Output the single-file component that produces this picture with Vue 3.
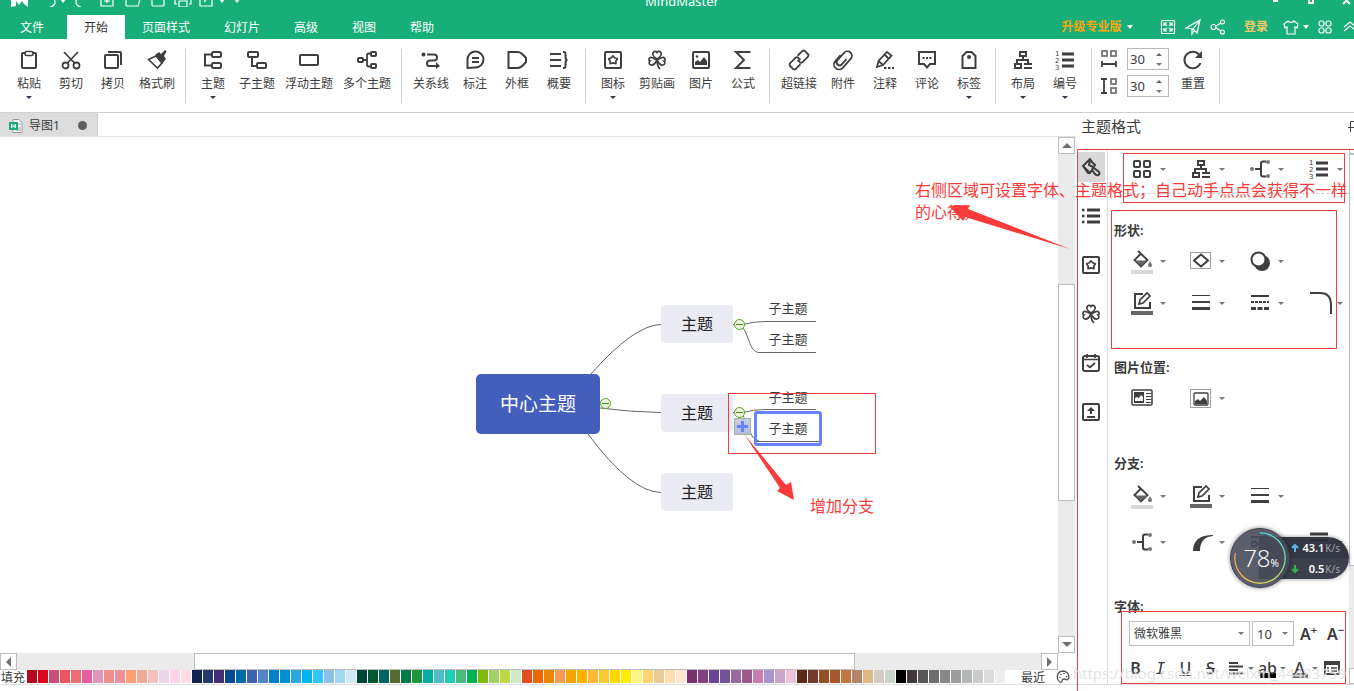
<script setup>
import { ref } from 'vue'

const icons = {
  paste: '<rect x="3" y="3" width="14" height="15" rx="1"/><rect x="6" y="1.5" width="8" height="4" rx="1.5" fill="#fff" stroke-width="1.6"/>',
  cut: '<g stroke-width="1.8"><circle cx="4.5" cy="15.5" r="3"/><circle cx="15.5" cy="15.5" r="3"/><path d="M6.5 13 17 2M13.5 13 3 2"/></g>',
  copy: '<rect x="2" y="5" width="13" height="13" rx="1"/><path d="M5 2h12q1 0 1 1v12"/>',
  brush: '<path d="M1.500 9.500 9 6l6 7-4.500 5Z" stroke-width="1.600"/><path fill="currentColor" stroke="none" d="m8 5 4-3 2 2 4-4 1.500 1.500L17 6l2 3-4 5Z"/>',
  topic: '<rect x="9" y="2" width="9" height="5" rx="1.500"/><rect x="9" y="13" width="9" height="5" rx="1.500"/><path d="M9 4.500H2v11h7"/>',
  subtopic: '<rect x="1" y="2" width="10" height="5" rx="1"/><rect x="10" y="13" width="9" height="5" rx="1"/><path d="M5 7v9h5"/>',
  floating: '<rect x="1" y="5" width="18" height="10" rx="1"/>',
  multi: '<rect x="1" y="8" width="5" height="4" rx="1"/><rect x="14" y="2" width="5" height="4" rx="1"/><rect x="14" y="14" width="5" height="4" rx="1"/><path d="M6 10h4M14 3.500h-2q-2 0-2 2v9q0 2 2 2h2" stroke-width="1.800"/>',
  relation: '<circle cx="2.500" cy="4.500" r="2" fill="currentColor" stroke="none"/><path d="M6 4.500h7q3 0 3 3t-3 3H9q-3 0-3 3t3 2.500h6"/><path fill="currentColor" stroke="none" d="m15 12 4 4-4 3Z"/>',
  callout: '<path d="M2.500 18v-8a8 8 0 1 1 8 7.500Z"/><path d="M7 8h7M7 12h7" stroke-width="1.800"/>',
  frame: '<path d="M1.500 2H11q3 0 8 6v4q-5 6-8 6H1.500Z"/>',
  summary: '<path d="M1 4h11M1 10h11M1 16h11M14 2h1q1.500 0 1.500 2v3q0 3 2 3-2 0-2 3v3q0 2-1.500 2h-1"/>',
  icon: '<rect x="2" y="2" width="16" height="16" rx="1"/><path d="m10 5.800 1.600 2 2.800 1-1.500 2.200v2.700l-2.900-.8-2.900.8V11L5.600 8.800l2.800-1Z" stroke-width="1.700" stroke-linejoin="round"/>',
  clover: '<g stroke-width="1.700"><path d="M10 9C7 7 5 5 6 3c1-2 3-2 4-.5C11 1 13 1 14 3c1 2-1 4-4 6Z"/><path d="M10 10C7 8 4 6 2.500 8c-1 1.500-.5 3 .5 3-1.500 1.500-1 3.500 1 4 2.500.4 4.500-2 6-5ZM10 10c3-2 6-4 7.500-2 1 1.500.5 3-.5 3 1.500 1.500 1 3.500-1 4-2.500.4-4.500-2-6-5Z"/><path d="M10 10q0 6 3 9"/></g>',
  picture: '<rect x="2" y="2" width="16" height="16" rx="1"/><path fill="currentColor" stroke="none" d="M4 15v-3l3-2 2 2 4-5 3 4v4Z"/><circle cx="6" cy="6.500" r="1.300" fill="currentColor" stroke="none"/>',
  sigma: '<path d="M17.500 2H3l8 8-8 8h14.500"/>',
  link: '<g transform="rotate(-45 10 10)" stroke-width="1.800"><path d="M8 14H1.500q-2 0-2-2V8q0-2 2-2H9q2 0 2 2v3M12 6h6.500q2 0 2 2v4q0 2-2 2H11q-2 0-2-2V9"/></g>',
  clip: '<g transform="rotate(-48 10 10)" stroke-width="1.800"><path d="M12 5H4a5 5 0 0 0 0 10h12a4.300 4.300 0 0 0 0-9H6a2.700 2.700 0 0 0 0 6h7"/></g>',
  note: '<path d="m2 17 1.500-6L12 2l4.500 3.500L8 15Zm8-12 4 4M3.500 11 8 15" stroke-width="1.800"/><path d="M9 18h2.500m1.500 0h2.500m1.500 0h2"/>',
  comment: '<path d="M2 2h16v12h-5l-3 3.500L7 14H2Z"/><path d="M5.500 8h2m1.500 0h2m1.500 0h2"/>',
  tag: '<path d="M3.500 18V6L7.500 2h5l4 4v12Z"/><circle cx="10" cy="7" r="2" fill="currentColor" stroke="none"/>',
  layout: '<rect x="7" y="2" width="6" height="4"/><path d="M10 6v4M4 14v-4h11v3"/><rect x="2" y="14" width="6" height="4"/><path d="M11 14h8M11 18h8"/>',
  number: '<path d="M7 4h12M7 10h12M7 16h12" stroke-width="3"/><g fill="currentColor" stroke="none" font-family="DejaVu Sans" font-size="7"><text x="0" y="6">1</text><text x="0" y="13">2</text><text x="0" y="20">3</text></g>',
  reset: '<path d="M17.500 13A8.300 8.300 0 1 1 16 4.500"/><path fill="currentColor" stroke="none" d="M19 1v7h-7Z"/>',
  hspace: '<g stroke-width="1.800"><g stroke="#777"><rect x="3" y="2" width="5" height="5"/><rect x="12" y="2" width="5" height="5"/></g><path d="M3 12v6M17 12v6M3 15h14"/></g>',
  vspace: '<g stroke-width="1.800"><g stroke="#777"><rect x="12" y="3" width="5" height="5"/><rect x="12" y="12" width="5" height="5"/></g><path d="M2 3h6M2 17h6M5 3v14"/></g>',
  styleBrush: '<path d="m2 9 7-7 2 3 3 3-5 8Zm7-7-1 6 4 2M2 9l5 7 2 0M13 11l5 4q1 2-.5 3T14 17l-3-4"/>',
  list: '<path d="M6 4h13M6 10h13M6 16h13" stroke-width="2.800"/><path d="M1 4h2.500M1 10h2.500M1 16h2.500" stroke-width="2.500"/>',
  calendar: '<rect x="2" y="3" width="16" height="15" rx="2"/><path d="M2 6.500h16M6 1v4M14 1v4M6 12l3 2.500 5-4.500" stroke-width="1.700"/>',
  upload: '<rect x="2" y="2" width="16" height="16" rx="1"/><path d="M6 15h8M10 12V8"/><path fill="currentColor" stroke="none" d="m6 9 4-4 4 4Z"/>',
  grid: '<rect x="2" y="2" width="6" height="6" rx="1"/><rect x="12" y="2" width="6" height="6" rx="1"/><rect x="2" y="12" width="6" height="6" rx="1"/><rect x="12" y="12" width="6" height="6" rx="1"/>',
  branch: '<circle cx="2" cy="10" r="2" fill="#777" stroke="none"/><path d="M5 10h6M16 2.500h-3q-2 0-2 2v11q0 2 2 2h3"/><circle cx="18" cy="3" r="2" fill="#777" stroke="none"/><circle cx="18" cy="17" r="2" fill="#777" stroke="none"/>',
  fill: '<path d="m6 0 9.500 9-6.500 6.500L2.500 9 9 2.500" stroke-width="1.900"/><path fill="#666" stroke="none" d="M3 9.500h12L9 15Z"/><path d="M18 10q4 6 0 6t0-6Z" fill="#777" stroke="none"/><path d="M-1 21h22" stroke="#d9d9d9" stroke-width="4"/>',
  shape: '<rect x="-.5" y="1.500" width="20" height="16" stroke-width="1" stroke-dasharray="1 1"/><path d="m3 9.500 7-6 7 6-7 6Z"/>',
  shadow: '<circle cx="12" cy="12" r="7" fill="currentColor"/><circle cx="8.500" cy="8.500" r="7" fill="#fff"/>',
  edit: '<path d="M11 1H3v14h15V9"/><path d="m7 11 1-4 7-7 3 3-7 7Z" stroke-width="1.700"/><path d="M-1 20h22" stroke="#666" stroke-width="4"/>',
  lines: '<path d="M1 2.500h18" stroke-width="1"/><path d="M1 9h18"/><path d="M1 15.500h18" stroke-width="3"/>',
  dashes: '<path d="M1 3h18"/><path d="M1 9h18" stroke-dasharray="3 1"/><path d="M1 15.500h18" stroke-width="3" stroke-dasharray="5 1.500"/>',
  corner: '<path d="M1 0h10Q22 0 22 12v9"/>',
  photoText: '<rect x="0" y="2" width="20" height="15" rx="1" stroke-width="1.500"/><path fill="currentColor" stroke="none" d="M2 4h10v11H2Z"/><path fill="#fff" stroke="none" d="M3 13v-3l2-1 2 1 2-3 2 2v4Z"/><path d="M14 5.500h5M14 8.500h5M14 11.500h5M14 14.500h5" stroke-width="1"/>',
  photoFit: '<rect x="-.5" y="1.500" width="20" height="18" stroke-width="1" stroke-dasharray="1 1"/><rect x="3" y="5" width="14" height="12" rx="1" stroke-width="1.300"/><path fill="currentColor" stroke="none" d="M4 16v-3l3-2 2 2 4-4 3 4v3Z"/>',
  curve: '<path fill="currentColor" stroke="none" d="M2 19q0-16 20-16v1Q9 5 9 19Z"/>',
  arrows: '<path d="M1 5h14"/><path d="m14 1 5 4-5 4Z" fill="currentColor" stroke="none"/><circle cx="4" cy="12" r="2.500"/><path d="M7 12h12"/>',
  lineStyle: '<path d="M1 2h18" stroke-width="3"/><path d="M1 8h18" stroke-dasharray="3 1"/>'
}

const heads = {
  logo: '<path d="M1 20V7l4 6 5-5 4 5 4-6v13l-4-3-2-3-3 4-3-4v5Z" fill="#fff" stroke="none"/>',
  undo: '<path d="M5 10h7q4 1 4 5t-5 5"/>',
  redo: '<path d="M14 10H9q-4 1-4 5t5 5"/>',
  new: '<path d="M4 5v14h12V5M10 10v6M7 14h6"/>',
  open: '<path d="M3 19V8h12v3M3 19h12l3-10"/>',
  save: '<path d="M4 5v13q0 1 1 1h10q1 0 1-1V5"/>',
  print: '<path d="M4 17H2v-7h16v7h-2M6 14h8v6H6z"/>',
  export: '<path d="M4 6v13h12V6M8 15l5-6"/>',
  caretTop: '<path fill="currentColor" stroke="none" d="M7 12h6l-3 4z"/>',
  caret: '<path fill="currentColor" stroke="none" d="M7 8h6l-3 4z"/>',
  full: '<rect x="3.500" y="3.500" width="13" height="13" rx="1"/><path d="M6 9V6h3M6 6l3 3M11 6h3v3M14 6l-3 3M6 11v3h3M6 14l3-3M14 11v3h-3M14 14l-3-3"/>',
  send: '<path d="m3 11 14-8-3 13-4-4Zm7 1 7-9M9 12v5l2-3"/>',
  share: '<circle cx="5.500" cy="10" r="2.500"/><circle cx="14.500" cy="5" r="2"/><circle cx="14.500" cy="15" r="2"/><path d="m8 9 5-3M8 11l5 3"/>',
  shirt: '<path d="M7 4q3 3 6 0l4 3-1 4-2-1v7H6v-7l-2 1-1-4Z"/>',
  apps: '<rect x="4" y="4" width="5" height="5" rx="2"/><rect x="11" y="4" width="5" height="5" rx="2"/><rect x="4" y="11" width="5" height="5" rx="2"/><rect x="11" y="11" width="5" height="5" rx="2"/>',
  up: '<path d="m6 10 6-5 6 5M6 14l6-5 6 5"/>'
}

const quick = ['logo', 'undo', 'caretTop', 'redo', 'new', 'open', 'save', 'print', 'export', 'caretTop', 'caretTop']
const menus = ['文件', '开始', '页面样式', '幻灯片', '高级', '视图', '帮助']
const groups = [
  [['粘贴', 'paste', true], ['剪切', 'cut'], ['拷贝', 'copy'], ['格式刷', 'brush']],
  [['主题', 'topic', true], ['子主题', 'subtopic'], ['浮动主题', 'floating'], ['多个主题', 'multi']],
  [['关系线', 'relation'], ['标注', 'callout'], ['外框', 'frame'], ['概要', 'summary']],
  [['图标', 'icon', true], ['剪贴画', 'clover'], ['图片', 'picture'], ['公式', 'sigma']],
  [['超链接', 'link'], ['附件', 'clip'], ['注释', 'note'], ['评论', 'comment'], ['标签', 'tag', true]],
  [['布局', 'layout', true], ['编号', 'number', true]]
]
const spins = ref([
  { icon: 'hspace', label: '水平间距', value: 30 },
  { icon: 'vspace', label: '垂直间距', value: 30 }
])
const sideTabs = [
  ['styleBrush', '主题格式'], ['list', '大纲'], ['icon', '图标'],
  ['clover', '剪贴画'], ['calendar', '任务'], ['upload', '导出']
]
const sections = [
  { title: '形状:', cls: 'shape', rows: [['fill', 'shape', 'shadow'], ['edit', 'lines', 'dashes', 'corner']] },
  { title: '图片位置:', cls: 'photo', rows: [['photoText', 'photoFit']] },
  { title: '分支:', cls: 'limb', rows: [['fill', 'edit', 'lines'], ['branch', 'curve', 'arrows', 'lineStyle']] }
]
const nodes = [
  { text: '中心主题', kind: 'root', x: 476, y: 237 },
  { text: '主题', kind: 'main', x: 661, y: 168 },
  { text: '主题', kind: 'main', x: 661, y: 257 },
  { text: '主题', kind: 'main', x: 661, y: 336 },
  { text: '子主题', kind: 'leaf', x: 758, y: 159 },
  { text: '子主题', kind: 'leaf', x: 758, y: 190 },
  { text: '子主题', kind: 'leaf', x: 758, y: 248 },
  { text: '子主题', kind: 'leaf picked', x: 754, y: 274 }
]
const folds = [[605, 266], [739, 187], [739, 275]]
const colors = (
  'B40A1B D8091F C94F79 EA5564 EB6E73 E660A0 E197B8 EF908A F19099 FFA07A EFAB95 F6C0BC EAD6E8 FFD5E5 FFDFE4 ' +
  '0E2350 23386D 402D74 08488C 006AA6 4062B0 5584C6 0080CD 0090D0 2EA7E0 00B4F0 30C8FA 8DC0EB A0D8EF CFEAF6 ' +
  '004438 005830 006560 556B2F 007A48 1D963F 00AF9E 50BEC4 1BCEB4 48BB80 00B254 80B910 A3D165 BFD845 CEE8CC ' +
  'E34F20 EC6800 F08300 F39A55 F3A500 FFB000 FFB738 FBCA30 FFD900 FFEC00 FDF286 FED470 EACB98 FFDDAD FCE8D0 ' +
  '783070 834085 684398 74529A 9868A0 9D598A CC7DB0 A893CF C9A6C9 ECC3DB ' +
  '5B2A18 733A30 944E28 A9572A C07840 B48568 DEB887 D5CBC6 CAD4CB ' +
  '000000 403838 585656 6E6E6E 878787 9C9E9E B5B7B7 CACBCB DBDBDB EDEDED'
).split(' ')
</script>

<template>
  <div class="app">
    <header>
      <div class="titlebar">
        <div class="quick">
          <button v-for="(q, i) in quick" :key="i" :aria-label="q">
            <svg class="hi" viewBox="0 0 20 20" v-html="heads[q]"></svg>
          </button>
        </div>
        <span class="apptitle">MindMaster</span>
        <svg class="wins" viewBox="0 0 84 15"><path d="M3 1h5M39-3v6h4v-6M73-3l7 7M80-3l-7 7" /></svg>
      </div>
      <div class="menubar">
        <nav>
          <button v-for="(m, i) in menus" :key="m" :class="{ on: i === 1 }">{{ m }}</button>
        </nav>
        <div class="account">
          <button class="pro">升级专业版</button>
          <button aria-label="版本"><svg class="hi" viewBox="0 0 20 20" v-html="heads.caret"></svg></button>
          <span></span>
          <button v-for="n in ['full', 'send', 'share']" :key="n" :aria-label="n">
            <svg class="hi" viewBox="0 0 20 20" v-html="heads[n]"></svg>
          </button>
          <button class="login">登录</button>
          <button v-for="n in ['shirt', 'caret', 'apps', 'up']" :key="n" :aria-label="n">
            <svg class="hi" viewBox="0 0 20 20" v-html="heads[n]"></svg>
          </button>
        </div>
      </div>
    </header>

    <div class="ribbon">
      <template v-for="(g, gi) in groups" :key="gi">
        <button v-for="it in g" :key="it[0]" class="tool" :class="'n' + it[0].length">
          <svg class="ic" viewBox="0 0 20 20" v-html="icons[it[1]]"></svg>
          <span>{{ it[0] }}</span>
          <i v-if="it[2]" class="caret dark"></i>
        </button>
        <div class="sep"></div>
      </template>
      <div class="spins">
        <label v-for="s in spins" :key="s.icon">
          <svg class="ic" viewBox="0 0 20 20" v-html="icons[s.icon]"></svg>
          <span class="spinbox">
            <input v-model="s.value" type="number" :aria-label="s.label" />
            <span class="steps"><i class="caret upward"></i><i class="caret"></i></span>
          </span>
        </label>
      </div>
      <button class="tool n2">
        <svg class="ic" viewBox="0 0 20 20" v-html="icons.reset"></svg>
        <span>重置</span>
      </button>
      <div class="sep"></div>
    </div>

    <main>
      <section class="work">
        <div class="tabs">
          <button class="doc">
            <svg viewBox="0 0 14 14">
              <path d="M4 .5h6l3 3v10H4z" fill="#fff" stroke="#999" />
              <path d="M6 9h6M6 11h6M9 5h3" stroke="#999" />
              <path d="M0 3h9v8H0z" fill="#15ae78" />
              <path d="M2.500 9V5l4 4V5l-4 4" stroke="#fff" fill="none" />
            </svg>
            <span>导图1</span>
            <i></i>
          </button>
        </div>
        <div class="stage">
          <div class="canvas">
            <svg class="wires" width="900" height="515">
              <g fill="none" stroke="#666">
                <path d="M590 238q44-50 71-50.500M600 271q30 4 61 4.500M588 297q43 58 73 58.500" />
                <path d="M733 187.500h10q10-3 22-3h51M739 187c11 8 9 28 20 28.500h57M733 275.500h10q10-3 22-3h51M739 275c11 8 9 28 20 28.500" />
              </g>
            </svg>
            <div
              v-for="(n, i) in nodes" :key="i" class="node" :class="n.kind"
              :style="{ left: n.x + 'px', top: n.y + 'px' }"
            ><span>{{ n.text }}</span></div>
            <button
              v-for="(f, i) in folds" :key="'f' + i" class="fold" aria-label="折叠"
              :style="{ left: f[0] - 5 + 'px', top: f[1] - 5 + 'px' }"
            ></button>
            <button class="add" aria-label="增加分支"></button>
            <div class="mark branchmark"></div>
            <svg class="wires" width="900" height="515">
              <path fill="#fb3a3a" d="m744 297 42 51 5-3 3 18-17-9 3-3Z" />
            </svg>
            <span class="remark addtext">增加分支</span>
          </div>
          <div class="vbar">
            <button aria-label="向上"><i class="tri t"></i></button>
            <div class="track"><div class="thumb"></div></div>
            <button aria-label="向下"><i class="tri b"></i></button>
          </div>
          <div class="hbar">
            <button aria-label="向左"><i class="tri l"></i></button>
            <div class="track"><div class="thumb"></div></div>
            <button aria-label="向右"><i class="tri r"></i></button>
          </div>
        </div>
        <div class="palette">
          <span>填充</span>
          <div class="swatches">
            <button v-for="c in colors" :key="c" :aria-label="'#' + c" :style="{ background: '#' + c }"></button>
          </div>
          <span class="recent">最近</span>
          <svg viewBox="0 0 14 14" fill="none" stroke="#555" stroke-width="1.300">
            <path d="M7 1a6 6 0 0 0-3 11q2 1 2-1t2-2 3 1q2-1 2-3a6 6 0 0 0-6-6Z" />
            <path d="M4 7v1M5 4v1M8 3v1M10.500 6v1" stroke-width="1.600" />
          </svg>
        </div>
      </section>

      <aside>
        <div class="asidehead">
          <h2>主题格式</h2>
          <svg viewBox="0 0 6 12" fill="none" stroke="#444"><path d="M6 1.500H2.500V7M0 7.500h6M2.500 7v5" /></svg>
        </div>
        <div class="asidebody">
          <div class="sidetabs">
            <button v-for="(s, i) in sideTabs" :key="s[0]" :class="{ on: i === 0 }" :aria-label="s[1]">
              <svg class="ic" viewBox="0 0 20 20" v-html="icons[s[0]]"></svg>
            </button>
          </div>
          <div class="props">
            <div class="row toprow">
              <button v-for="n in ['grid', 'layout', 'branch', 'number']" :key="n" class="cell" :aria-label="n">
                <svg class="ic" viewBox="0 0 20 20" v-html="icons[n]"></svg><i class="caret"></i>
              </button>
            </div>
            <div v-for="s in sections" :key="s.cls" :class="s.cls">
              <h3>{{ s.title }}</h3>
              <div v-for="(r, ri) in s.rows" :key="ri" class="row">
                <button v-for="n in r" :key="n" class="cell" :aria-label="n">
                  <svg class="ic" viewBox="0 0 20 20" v-html="icons[n]"></svg>
                  <i v-if="n !== 'photoText'" class="caret"></i>
                </button>
              </div>
            </div>
            <div class="font">
              <h3>字体:</h3>
              <div class="fontrow">
                <label class="pick family"><select aria-label="字体"><option>微软雅黑</option></select><i class="caret"></i></label>
                <label class="pick size"><select aria-label="字号"><option>10</option></select><i class="caret"></i></label>
                <button class="grow">A<sup>+</sup></button>
                <button class="grow">A<sup>−</sup></button>
              </div>
              <div class="formatrow">
                <button>B</button>
                <button><em>I</em></button>
                <button><u>U</u></button>
                <button><s>S</s></button>
                <button aria-label="对齐"><svg viewBox="0 0 16 14"><path d="M1 2h9M1 5.500h14M1 9h9M1 12.500h14" /></svg></button>
                <i class="caret"></i>
                <button class="ab">ab</button>
                <i class="caret"></i>
                <button class="ink">A</button>
                <i class="caret"></i>
                <button aria-label="更多"><svg viewBox="0 0 16 14"><path d="M1 1h14v12H1ZM1 3h14" /><path d="M3 7h2M7 7h6M3 10h2M7 10h6" stroke-width="1.500" /></svg></button>
              </div>
            </div>
          </div>
          <div class="slim"><div class="slimbtn"></div><div class="slimthumb"></div><div class="slimtrack"></div><div class="slimbtn"></div></div>
        </div>
      </aside>
    </main>
    <footer></footer>

    <div class="overlay">
      <div class="mark m1"></div>
      <div class="mark m2"></div>
      <div class="mark m3"></div>
      <div class="mark m4"></div>
      <span class="water">https://blog.csdn.net/weixin_44483759</span>
      <p class="remark tip">右侧区域可设置字体、主题格式；自己动手点点会获得不一样的心得。</p>
      <svg class="tiparrow" viewBox="0 0 124 50"><path fill="#fb3a3a" d="M124 49 19 17l-2 4L3 6l21-1-2 4Z" /></svg>
      <div class="speed">
        <div class="rates">
          <div><svg viewBox="0 0 8 8"><path d="M4 8V2M1 4l3-3 3 3" stroke="#5cb8f0" /></svg><b>43.1</b><span>K/s</span></div>
          <div><svg viewBox="0 0 8 8"><path d="M4 0v6M1 4l3 3 3-3" stroke="#35b34a" /></svg><b>0.5</b><span>K/s</span></div>
        </div>
        <div class="dial"><div class="ring"></div><strong>78</strong><small>%</small></div>
      </div>
    </div>
  </div>
</template>

<style>
body {
  margin: 0;
  overflow: hidden;
}
</style>

<style scoped>
.app {
  position: relative;
  display: flex;
  flex-direction: column;
  height: 100vh;
  overflow: hidden;
  background: #fff;
  color: #3c3c3c;
  font: 12px/18px "Noto Sans", "Noto Sans CJK SC", sans-serif;
}
.app * {
  box-sizing: border-box;
}
button,
select,
input {
  margin: 0;
  padding: 0;
  border: 0;
  background: none;
  color: inherit;
  font: inherit;
}
h2,
h3,
p {
  margin: 0;
}
.ic {
  width: 20px;
  height: 20px;
  flex: none;
  overflow: visible;
  fill: none;
  stroke: currentColor;
  stroke-width: 2;
  color: #3f3f3f;
}
.caret {
  flex: none;
  width: 0;
  height: 0;
  border: 3px solid transparent;
  border-top-color: #777;
  border-bottom: 0;
}
.caret.dark {
  border-top-color: #33384d;
}
.caret.upward {
  border: 3px solid transparent;
  border-top: 0;
  border-bottom-color: #666;
}

header {
  flex: none;
  background: #17ae79;
  color: #fff;
}
.hi {
  display: block;
  flex: none;
  width: 20px;
  height: 20px;
  fill: none;
  stroke: currentColor;
  stroke-width: 1.2;
}
.titlebar {
  position: relative;
  display: flex;
  align-items: flex-end;
  justify-content: space-between;
  height: 15px;
  overflow: hidden;
}
.quick {
  display: grid;
  grid-template-columns: 40px 18px 10px 26px 26px 25px 25px 25px 22px 10px 20px;
  margin-bottom: 8px;
}
.quick button,
.account button {
  display: flex;
  justify-content: center;
  align-items: center;
}
.apptitle {
  position: absolute;
  left: 0;
  right: 0;
  bottom: 5px;
  padding-left: 10px;
  font-size: 13px;
  text-align: center;
}
.wins {
  width: 84px;
  height: 15px;
  fill: none;
  stroke: #fff;
  stroke-width: 2;
}
.menubar {
  display: flex;
  justify-content: space-between;
  height: 24px;
}
nav {
  display: flex;
}
nav button {
  padding: 1px 17px 0;
}
nav button:first-child {
  padding: 1px 23px 0 20px;
}
nav .on {
  background: #fff;
  color: #333;
}
.account {
  display: grid;
  grid-template-columns: 61px 16px 17px 25px 25px 25px 52px 18px 12px 26px 16px;
}
.account button:last-child {
  justify-content: flex-start;
}
.account .pro {
  color: #f9a70a;
  font-weight: 700;
}
.account .login {
  color: #f3c969;
  font-weight: 700;
}

.ribbon {
  display: flex;
  flex: none;
  height: 74px;
  padding-left: 8px;
  border-bottom: 1px solid #d0d0d0;
}
.tool {
  display: flex;
  flex: none;
  flex-direction: column;
  align-items: center;
  padding-top: 11px;
  white-space: nowrap;
}
.tool span {
  margin-top: 5px;
}
.tool .caret {
  margin-top: 3px;
}
.n2 {
  width: 42px;
}
.n3 {
  width: 46px;
}
.n4 {
  width: 58px;
}
.sep {
  flex: none;
  width: 12px;
  height: 54px;
  margin-top: 10px;
  background: linear-gradient(#d0d0d0, #d0d0d0) 5px 0 / 1px 100% no-repeat;
}
.spins {
  display: flex;
  flex: none;
  flex-direction: column;
  gap: 5px;
  width: 74px;
  padding: 9px 3px 0 1px;
}
.spins label {
  display: flex;
  align-items: center;
  justify-content: space-between;
}
.spinbox {
  display: flex;
  align-items: center;
  width: 42px;
  height: 22px;
  padding: 0 6px 0 2px;
  border: 1px solid #b8b8b8;
}
.spinbox input {
  flex: 1;
  width: 20px;
  min-width: 0;
  appearance: textfield;
  font-size: 13px;
}
.spinbox input::-webkit-inner-spin-button {
  display: none;
}
.steps {
  display: flex;
  flex-direction: column;
  gap: 7px;
}

main {
  display: flex;
  flex: 1;
  min-height: 0;
}
.work {
  display: flex;
  flex: 1;
  flex-direction: column;
  min-width: 0;
}
.tabs {
  flex: none;
  height: 24px;
  border-bottom: 1px solid #e2e2e2;
}
.doc {
  display: flex;
  align-items: center;
  width: 98px;
  height: 23px;
  padding: 2px 10px 0 9px;
  background: #dcdcdc;
  border-right: 1px solid #d0d0d0;
}
.doc svg {
  width: 14px;
  height: 14px;
  margin-right: 6px;
}
.doc i {
  width: 9px;
  height: 9px;
  margin-left: auto;
  border-radius: 50%;
  background: #606060;
}
.stage {
  display: grid;
  flex: 1;
  grid-template: minmax(0, 1fr) 17px / minmax(0, 1fr) 17px;
  min-height: 0;
  padding-right: 1px;
}
.canvas {
  position: relative;
  overflow: hidden;
}
.wires {
  position: absolute;
  left: 0;
  top: 0;
}
.node {
  position: absolute;
  display: flex;
  align-items: center;
  justify-content: center;
  white-space: nowrap;
}
.root {
  width: 124px;
  height: 60px;
  border-radius: 5px;
  background: #435fbb;
  color: #fff;
  font-size: 19px;
}
.main {
  width: 72px;
  height: 38px;
  border-radius: 4px;
  background: #ebebf3;
  color: #222;
  font-size: 16px;
}
.leaf {
  width: 60px;
  height: 24px;
  font-size: 13px;
}
.picked {
  width: 68px;
  height: 35px;
  border: 3px solid #6683fb;
  border-radius: 3px;
}
.picked span {
  flex: 1;
  height: 27px;
  border-bottom: 1px solid #666;
  line-height: 27px;
  text-align: center;
}
.fold {
  position: absolute;
  width: 11px;
  height: 11px;
  border: 1px solid #5aa916;
  border-radius: 50%;
  background: linear-gradient(#459c0c, #459c0c) center / 7px 1px no-repeat #e9f6df;
}
.add {
  position: absolute;
  left: 734px;
  top: 281px;
  width: 17px;
  height: 17px;
  border: 1px solid #9cb39c;
  background:
    linear-gradient(#6683fb, #6683fb) center / 11px 3px no-repeat,
    linear-gradient(#6683fb, #6683fb) center / 3px 11px no-repeat,
    linear-gradient(#c9cdea, #b4bbdd);
}
.mark {
  position: absolute;
  border: 1px solid #f03e3e;
}
.branchmark {
  left: 728px;
  top: 256px;
  width: 148px;
  height: 61px;
}
.remark {
  color: #fb3a3a;
  font-size: 16px;
  line-height: 22px;
}
.addtext {
  position: absolute;
  left: 810px;
  top: 358px;
}
.vbar,
.hbar {
  display: flex;
  background: #ebebeb;
}
.vbar {
  flex-direction: column;
}
.vbar button,
.hbar button {
  display: flex;
  flex: none;
  align-items: center;
  justify-content: center;
  width: 17px;
  height: 17px;
  border: 1px solid #bdbdbd;
  background: #fff;
}
.track {
  flex: 1;
}
.thumb {
  border: 1px solid #bdbdbd;
  background: #fff;
}
.track,
.thumb {
  position: relative;
}
.vbar .thumb {
  top: 27%;
  height: 45%;
}
.hbar .thumb {
  left: 17.3%;
  width: 64.5%;
  height: 17px;
}
.tri {
  border: 5px solid transparent;
}
.tri.t {
  border-top: 0;
  border-bottom-color: #707070;
}
.tri.b {
  border-bottom: 0;
  border-top-color: #707070;
}
.tri.l {
  border-left: 0;
  border-right-color: #707070;
}
.tri.r {
  border-right: 0;
  border-left-color: #707070;
}
.palette {
  display: flex;
  flex: none;
  align-items: center;
  height: 14px;
  padding-left: 1px;
}
.palette span {
  margin-top: 2px;
}
.palette svg {
  width: 14px;
  height: 14px;
  margin: 0 6px 0 11px;
}
.swatches {
  display: flex;
  gap: 1px;
  height: 13px;
  margin: 0 auto 1px 2px;
}
.swatches button {
  width: 10px;
}

aside {
  display: flex;
  flex: none;
  flex-direction: column;
  width: 278px;
}
.asidehead {
  display: flex;
  flex: none;
  align-items: center;
  justify-content: space-between;
  height: 37px;
  padding: 0 0 12px 5px;
}
.asidehead h2 {
  font-size: 15px;
  font-weight: 400;
}
.asidehead svg {
  width: 6px;
  height: 12px;
}
.asidebody {
  display: flex;
  flex: 1;
  min-height: 0;
}
.sidetabs {
  display: flex;
  flex: none;
  flex-direction: column;
  gap: 19px;
  width: 32px;
  padding: 2px 1px 0;
  border-right: 1px solid #dcdcdc;
}
.sidetabs button {
  display: flex;
  flex: none;
  align-items: center;
  justify-content: center;
  width: 28px;
  height: 30px;
}
.sidetabs .on {
  background: #d8d8d8;
}
.props {
  flex: 1;
  min-width: 0;
  overflow: hidden;
}
h3 {
  height: 20px;
  padding-left: 6px;
  font-size: 13px;
  font-weight: 600;
  line-height: 20px;
}
.row {
  display: flex;
  height: 42px;
  padding-left: 22px;
}
.toprow {
  height: 44px;
  padding-bottom: 5px;
  border-bottom: 1px dashed #ccc;
}
.cell {
  display: flex;
  flex: none;
  align-items: center;
  gap: 8px;
  width: 59px;
  padding-left: 2px;
}
.shape {
  padding-top: 26px;
}
.photo {
  padding-top: 33px;
}
.limb {
  padding-top: 34px;
}
.limb .row {
  height: 46px;
}
.font {
  padding-top: 31px;
}
.fontrow {
  display: flex;
  gap: 2px;
  padding: 5px 0 0 21px;
}
.pick {
  display: flex;
  align-items: center;
  height: 25px;
  padding: 0 5px 0 4px;
  border: 1px solid #bdbdbd;
}
.pick select {
  flex: 1;
  min-width: 0;
  appearance: none;
}
.family {
  width: 121px;
}
.size {
  width: 42px;
}
.size select {
  font-size: 13px;
}
.grow {
  width: 25px;
  font: 600 16px/20px "Noto Sans", sans-serif;
  white-space: nowrap;
}
.grow sup {
  font-size: 11px;
  line-height: 0;
}
.formatrow {
  display: flex;
  align-items: center;
  height: 26px;
  margin-top: 9px;
  padding-left: 15px;
}
.formatrow button {
  flex: none;
  width: 25px;
  font: 500 16px/20px "Noto Sans", sans-serif;
}
.formatrow button:first-child {
  font-weight: 600;
}
.formatrow em {
  font-family: "DejaVu Sans Mono", monospace;
}
.formatrow svg {
  display: block;
  width: 16px;
  height: 14px;
  margin: auto;
  fill: none;
  stroke: #3f3f3f;
  stroke-width: 2;
}
.formatrow .caret {
  margin-right: 1px;
}
.formatrow .ab,
.formatrow .ink {
  height: 20px;
  line-height: 16px;
  background: linear-gradient(#000, #000) center bottom / 16px 5px no-repeat;
}
.formatrow .ink {
  background-image: linear-gradient(#666, #666);
}
.slim {
  display: flex;
  flex: none;
  flex-direction: column;
  width: 5px;
  overflow: hidden;
}
.slimbtn {
  flex: none;
  width: 17px;
  height: 16px;
  margin-top: -12px;
  border: 1px solid #bdbdbd;
}
.slimbtn:last-child {
  margin-top: 0;
}
.slimthumb {
  flex: 4;
  width: 17px;
  border: 1px solid #bdbdbd;
}
.slimtrack {
  flex: 1;
  background: #ebebeb;
}
footer {
  flex: none;
  height: 7px;
  border-top: 1px solid #dedede;
}

.overlay {
  position: absolute;
  top: 0;
  right: 0;
  bottom: 0;
  width: 460px;
  pointer-events: none;
}
.m1 {
  top: 149px;
  right: -1px;
  bottom: -1px;
  width: 278px;
}
.m2 {
  top: 153px;
  right: 9px;
  width: 222px;
  height: 50px;
}
.m3 {
  top: 210px;
  right: 17px;
  width: 226px;
  height: 139px;
}
.m4 {
  top: 611px;
  right: 8px;
  width: 225px;
  height: 73px;
}
.water {
  position: absolute;
  right: 8px;
  bottom: 9px;
  color: rgba(200, 200, 200, 0.5);
  font-size: 15px;
  text-shadow: 0 0 1px #fff;
}
.tip {
  position: absolute;
  top: 179px;
  right: 5px;
  width: 434px;
}
.tiparrow {
  position: absolute;
  top: 200px;
  right: 284px;
  width: 124px;
  height: 50px;
}
.speed {
  position: absolute;
  top: 528px;
  right: 5px;
  display: flex;
  align-items: center;
  justify-content: flex-end;
  width: 119px;
  height: 60px;
}
.rates {
  width: 90px;
  height: 42px;
  padding-right: 9px;
  border-radius: 0 21px 21px 0;
  background: linear-gradient(rgba(40, 44, 56, 0.94) 50%, rgba(48, 52, 64, 0.94) 50%);
  box-shadow: 0 0 4px rgba(0, 0, 0, 0.4);
}
.rates div {
  display: flex;
  align-items: center;
  justify-content: flex-end;
  height: 21px;
  color: #fff;
  font-size: 11px;
}
.rates svg {
  width: 8px;
  height: 8px;
  margin: 0 auto 0 32px;
  fill: none;
  stroke-width: 2;
}
.rates b {
  font-weight: 600;
}
.rates span {
  margin-left: 1px;
  color: #a0a3ab;
  font-size: 10px;
}
.dial {
  position: absolute;
  left: 0;
  top: 0;
  display: flex;
  align-items: baseline;
  justify-content: center;
  width: 60px;
  height: 60px;
  padding-left: 2px;
  border: 1px solid #3d424e;
  border-radius: 50%;
  background: rgba(72, 77, 91, 0.9);
  box-shadow: 0 0 4px rgba(0, 0, 0, 0.5);
  color: #fff;
  line-height: 58px;
}
.ring {
  position: absolute;
  inset: 3px;
  border-radius: 50%;
  background: conic-gradient(#48e0dc, #74e0a0 25%, #c8e060 42%, #f0d050 55%, #f59a50 78%, transparent 78%);
  mask: radial-gradient(circle, transparent 24px, #000 25px);
}
.dial strong {
  font: 300 24px/58px "Open Sans", sans-serif;
}
.dial small {
  font-size: 10px;
}
</style>
